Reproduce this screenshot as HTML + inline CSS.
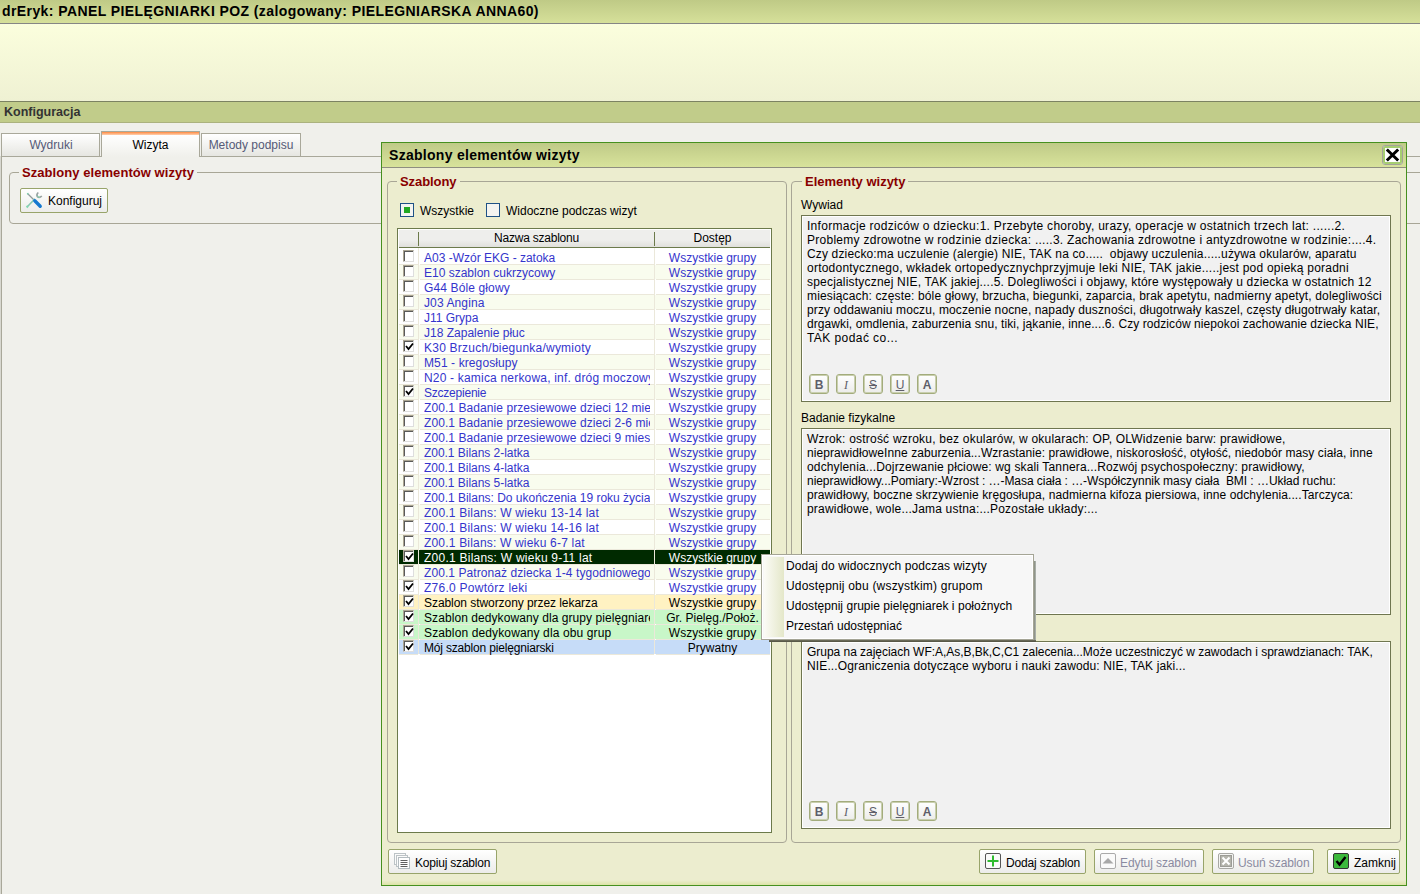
<!DOCTYPE html>
<html><head><meta charset="utf-8">
<style>
*{box-sizing:border-box}
html,body{margin:0;padding:0}
body{width:1420px;height:894px;position:relative;overflow:hidden;background:#f0f0eb;font-family:"Liberation Sans",sans-serif;font-size:12px;color:#000}
.a{position:absolute}
.t{position:absolute;white-space:nowrap;line-height:14px;font-size:12px}
#hdr{left:0;top:0;width:1420px;height:24px;background:linear-gradient(#bfca86,#d6e09a);border-bottom:1px solid #858585}
#hdr .t{left:2px;top:4px;font-weight:bold;font-size:14px;letter-spacing:0.41px;line-height:14px}
#ybar{left:0;top:24px;width:1420px;height:77px;background:linear-gradient(#fbfedd,#eff1d3)}
#kbar{left:0;top:101px;width:1420px;height:22px;background:#c1cc8a;border-top:1px solid #7c8262;border-bottom:1px solid #abb27e}
.tab{position:absolute;border:1px solid #a9a89a;border-bottom:none;background:linear-gradient(#ffffff,#e6e6e1);text-align:center;color:#555a78}
.fs{position:absolute;border:1px solid #a8a696;border-radius:4px}
.lg{position:absolute;font-weight:bold;font-size:13px;color:#880000;white-space:nowrap;line-height:14px;padding:0 3px}
.cb{position:absolute;width:11px;height:12px;background:#fff;border-top:1px solid #aba592;border-left:1px solid #aba592;border-right:1px solid #dedede;border-bottom:1px solid #dedede;box-shadow:inset 1px 1px 0 #5a5a5a}

.ta{position:absolute;left:801px;width:590px;border:1px solid #6f7650;background:#f1f1f1;box-shadow:inset 1px 1px 0 #fff, inset -1px -1px 0 #fff}
.fb{position:absolute;width:20px;height:20px;border:1px solid #a3ac7c;border-radius:3px;background:linear-gradient(#ffffff,#ececea);box-shadow:inset 0 0 0 1px #c9cfae;text-align:center;font-size:12px;line-height:20px;color:#5e5e6a}
.mi{position:absolute;left:786px;white-space:nowrap;font-size:12px;line-height:14px;letter-spacing:0.1px}
.btn{position:absolute;border:1px solid #98a46a;border-radius:2px;background:linear-gradient(#ffffff,#ececea)}
</style></head><body>

<div id="hdr" class="a"><div class="t">drEryk: PANEL PIELĘGNIARKI POZ (zalogowany: PIELEGNIARSKA ANNA60)</div></div>
<div id="ybar" class="a"></div>
<div id="kbar" class="a"><div class="t" style="left:4px;top:3px;font-weight:bold;font-size:12.5px;color:#333">Konfiguracja</div></div>

<!-- tab strip line -->
<div class="a" style="left:1px;top:156px;width:1419px;height:1px;background:#a9a89a"></div>
<!-- panel left border -->
<div class="a" style="left:0;top:156px;width:1px;height:738px;background:#d8d8d0"></div>
<div class="a" style="left:1px;top:156px;width:1px;height:738px;background:#a9a89a"></div>

<div class="tab" style="left:1px;top:133px;width:99px;height:23px"><div class="t" style="left:0;width:98px;top:4px">Wydruki</div></div>
<div class="tab" style="left:101px;top:131px;width:99px;height:26px;background:linear-gradient(#fff 10%,#f0f0eb);border-bottom:none;color:#000"><div class="a" style="left:0;top:0;width:97px;height:3px;background:linear-gradient(#ff8a40,#ffd0b0)"></div><div class="t" style="left:0;width:97px;top:6px">Wizyta</div></div>
<div class="tab" style="left:201px;top:133px;width:100px;height:23px"><div class="t" style="left:0;width:98px;top:4px">Metody podpisu</div></div>

<div class="fs" style="left:9px;top:172px;width:1420px;height:52px"></div>
<div class="lg" style="left:19px;top:166px;background:#f0f0eb;letter-spacing:0.06px">Szablony elementów wizyty</div>
<div class="btn" style="left:20px;top:188px;width:88px;height:25px">
  <svg class="a" style="left:1px;top:-1px" width="24" height="24" viewBox="0 0 24 24">
<path d="M5.5 5.5 L11.5 11.5" stroke="#8f9a9a" stroke-width="1.3"/>
<path d="M4.8 5.2 L6.2 4.8 L6.6 6.4 L5.2 6.6 Z" fill="#7fd0b0"/>
<path d="M5.5 18.5 L13 10.8" stroke="#86c8b0" stroke-width="1.6"/>
<path d="M4.5 18 L6 19.5" stroke="#7fd6b0" stroke-width="1.8"/>
<path d="M16.3 4.5 Q14 6.5 15.5 8.8 Q17.5 10.2 19.8 8" stroke="#96a0a0" stroke-width="1.6" fill="none"/>
<path d="M15 7.5 Q16 9.5 18 9.5" stroke="#7fd6b0" stroke-width="1" fill="none"/>
<path d="M12.8 12.8 L18.2 18.2" stroke="#1578d0" stroke-width="3.4" stroke-linecap="round"/>
</svg>
  <div class="t" style="left:27px;top:5px">Konfiguruj</div>
</div>

<!-- DIALOG -->
<div id="dlg" class="a" style="left:381px;top:142px;width:1026px;height:744px;border:1px solid #46901f;background:#ecedcf"></div>
<div class="a" style="left:382px;top:143px;width:1024px;height:25px;background:linear-gradient(#bfca87,#d8e39b);border-bottom:1px solid #8e8e80"></div>
<div class="t" style="left:389px;top:148px;font-weight:bold;font-size:14px;letter-spacing:0.29px">Szablony elementów wizyty</div>
<div class="a" style="left:1382px;top:145px;width:21px;height:20px;border:1px solid #a4a29a;border-radius:3px;background:#fff;box-shadow:inset 0 0 0 2px #a6ce72"></div>
<svg class="a" style="left:1385px;top:148px" width="15" height="14" viewBox="0 0 15 14"><path d="M1.8 1.5 L13.2 12.5 M13.2 1.5 L1.8 12.5" stroke="#000" stroke-width="3"/></svg>

<div class="a" style="left:382px;top:880px;width:1024px;height:5px;background:linear-gradient(#ecedcf,#dce3a6)"></div>
<!-- left fieldset -->
<div class="fs" style="left:387px;top:181px;width:400px;height:662px"></div>
<div class="lg" style="left:397px;top:175px;background:#ecedcf;letter-spacing:-0.07px">Szablony</div>

<!-- radio-ish checkboxes -->
<div class="a" style="left:400px;top:203px;width:14px;height:14px;border:1px solid #1e5185;background:#f4f4f0"></div>
<div class="a" style="left:404px;top:207px;width:6px;height:6px;background:#22a822"></div>
<div class="t" style="left:420px;top:204px">Wszystkie</div>
<div class="a" style="left:486px;top:203px;width:14px;height:14px;border:1px solid #1e5185;background:#f4f4f0"></div>
<div class="t" style="left:506px;top:204px">Widoczne podczas wizyt</div>

<!-- table -->
<div class="a" style="left:397px;top:228px;width:375px;height:605px;border:1px solid #6c7a4b;background:#fff"></div>
<div class="a" style="left:399px;top:230px;width:371px;height:17px;background:linear-gradient(#eeeeec 60%,#e0e0dc)"></div>
<div class="a" style="left:399px;top:247px;width:371px;height:1px;background:#6c7a4b"></div>
<div class="a" style="left:418px;top:232px;width:1px;height:14px;background:#6c7a4b"></div>
<div class="a" style="left:654px;top:232px;width:1px;height:14px;background:#6c7a4b"></div>
<div class="t" style="left:419px;width:235px;top:231px;text-align:center;letter-spacing:-0.22px">Nazwa szablonu</div>
<div class="t" style="left:655px;width:115px;top:231px;text-align:center">Dostęp</div>
<div class="a" style="left:399px;top:250px;width:19px;height:14px;background:#ffffff"></div>
<div class="a" style="left:419px;top:250px;width:235px;height:14px;background:#ffffff"></div>
<div class="a" style="left:655px;top:250px;width:115px;height:14px;background:#ffffff"></div>
<div class="a" style="left:399px;top:265px;width:19px;height:14px;background:#f9fcee"></div>
<div class="a" style="left:419px;top:265px;width:235px;height:14px;background:#f9fcee"></div>
<div class="a" style="left:655px;top:265px;width:115px;height:14px;background:#f9fcee"></div>
<div class="a" style="left:399px;top:280px;width:19px;height:14px;background:#ffffff"></div>
<div class="a" style="left:419px;top:280px;width:235px;height:14px;background:#ffffff"></div>
<div class="a" style="left:655px;top:280px;width:115px;height:14px;background:#ffffff"></div>
<div class="a" style="left:399px;top:295px;width:19px;height:14px;background:#f9fcee"></div>
<div class="a" style="left:419px;top:295px;width:235px;height:14px;background:#f9fcee"></div>
<div class="a" style="left:655px;top:295px;width:115px;height:14px;background:#f9fcee"></div>
<div class="a" style="left:399px;top:310px;width:19px;height:14px;background:#ffffff"></div>
<div class="a" style="left:419px;top:310px;width:235px;height:14px;background:#ffffff"></div>
<div class="a" style="left:655px;top:310px;width:115px;height:14px;background:#ffffff"></div>
<div class="a" style="left:399px;top:325px;width:19px;height:14px;background:#f9fcee"></div>
<div class="a" style="left:419px;top:325px;width:235px;height:14px;background:#f9fcee"></div>
<div class="a" style="left:655px;top:325px;width:115px;height:14px;background:#f9fcee"></div>
<div class="a" style="left:399px;top:340px;width:19px;height:14px;background:#ffffff"></div>
<div class="a" style="left:419px;top:340px;width:235px;height:14px;background:#ffffff"></div>
<div class="a" style="left:655px;top:340px;width:115px;height:14px;background:#ffffff"></div>
<div class="a" style="left:399px;top:355px;width:19px;height:14px;background:#f9fcee"></div>
<div class="a" style="left:419px;top:355px;width:235px;height:14px;background:#f9fcee"></div>
<div class="a" style="left:655px;top:355px;width:115px;height:14px;background:#f9fcee"></div>
<div class="a" style="left:399px;top:370px;width:19px;height:14px;background:#ffffff"></div>
<div class="a" style="left:419px;top:370px;width:235px;height:14px;background:#ffffff"></div>
<div class="a" style="left:655px;top:370px;width:115px;height:14px;background:#ffffff"></div>
<div class="a" style="left:399px;top:385px;width:19px;height:14px;background:#f9fcee"></div>
<div class="a" style="left:419px;top:385px;width:235px;height:14px;background:#f9fcee"></div>
<div class="a" style="left:655px;top:385px;width:115px;height:14px;background:#f9fcee"></div>
<div class="a" style="left:399px;top:400px;width:19px;height:14px;background:#ffffff"></div>
<div class="a" style="left:419px;top:400px;width:235px;height:14px;background:#ffffff"></div>
<div class="a" style="left:655px;top:400px;width:115px;height:14px;background:#ffffff"></div>
<div class="a" style="left:399px;top:415px;width:19px;height:14px;background:#f9fcee"></div>
<div class="a" style="left:419px;top:415px;width:235px;height:14px;background:#f9fcee"></div>
<div class="a" style="left:655px;top:415px;width:115px;height:14px;background:#f9fcee"></div>
<div class="a" style="left:399px;top:430px;width:19px;height:14px;background:#ffffff"></div>
<div class="a" style="left:419px;top:430px;width:235px;height:14px;background:#ffffff"></div>
<div class="a" style="left:655px;top:430px;width:115px;height:14px;background:#ffffff"></div>
<div class="a" style="left:399px;top:445px;width:19px;height:14px;background:#f9fcee"></div>
<div class="a" style="left:419px;top:445px;width:235px;height:14px;background:#f9fcee"></div>
<div class="a" style="left:655px;top:445px;width:115px;height:14px;background:#f9fcee"></div>
<div class="a" style="left:399px;top:460px;width:19px;height:14px;background:#ffffff"></div>
<div class="a" style="left:419px;top:460px;width:235px;height:14px;background:#ffffff"></div>
<div class="a" style="left:655px;top:460px;width:115px;height:14px;background:#ffffff"></div>
<div class="a" style="left:399px;top:475px;width:19px;height:14px;background:#f9fcee"></div>
<div class="a" style="left:419px;top:475px;width:235px;height:14px;background:#f9fcee"></div>
<div class="a" style="left:655px;top:475px;width:115px;height:14px;background:#f9fcee"></div>
<div class="a" style="left:399px;top:490px;width:19px;height:14px;background:#ffffff"></div>
<div class="a" style="left:419px;top:490px;width:235px;height:14px;background:#ffffff"></div>
<div class="a" style="left:655px;top:490px;width:115px;height:14px;background:#ffffff"></div>
<div class="a" style="left:399px;top:505px;width:19px;height:14px;background:#f9fcee"></div>
<div class="a" style="left:419px;top:505px;width:235px;height:14px;background:#f9fcee"></div>
<div class="a" style="left:655px;top:505px;width:115px;height:14px;background:#f9fcee"></div>
<div class="a" style="left:399px;top:520px;width:19px;height:14px;background:#ffffff"></div>
<div class="a" style="left:419px;top:520px;width:235px;height:14px;background:#ffffff"></div>
<div class="a" style="left:655px;top:520px;width:115px;height:14px;background:#ffffff"></div>
<div class="a" style="left:399px;top:535px;width:19px;height:14px;background:#f9fcee"></div>
<div class="a" style="left:419px;top:535px;width:235px;height:14px;background:#f9fcee"></div>
<div class="a" style="left:655px;top:535px;width:115px;height:14px;background:#f9fcee"></div>
<div class="a" style="left:399px;top:550px;width:19px;height:14px;background:#002a00"></div>
<div class="a" style="left:419px;top:550px;width:235px;height:14px;background:#002a00"></div>
<div class="a" style="left:655px;top:550px;width:115px;height:14px;background:#002a00"></div>
<div class="a" style="left:399px;top:565px;width:19px;height:14px;background:#f9fcee"></div>
<div class="a" style="left:419px;top:565px;width:235px;height:14px;background:#f9fcee"></div>
<div class="a" style="left:655px;top:565px;width:115px;height:14px;background:#f9fcee"></div>
<div class="a" style="left:399px;top:580px;width:19px;height:14px;background:#ffffff"></div>
<div class="a" style="left:419px;top:580px;width:235px;height:14px;background:#ffffff"></div>
<div class="a" style="left:655px;top:580px;width:115px;height:14px;background:#ffffff"></div>
<div class="a" style="left:399px;top:595px;width:19px;height:14px;background:#fff2c2"></div>
<div class="a" style="left:419px;top:595px;width:235px;height:14px;background:#fff2c2"></div>
<div class="a" style="left:655px;top:595px;width:115px;height:14px;background:#fff2c2"></div>
<div class="a" style="left:399px;top:610px;width:19px;height:14px;background:#c8f7c8"></div>
<div class="a" style="left:419px;top:610px;width:235px;height:14px;background:#c8f7c8"></div>
<div class="a" style="left:655px;top:610px;width:115px;height:14px;background:#c8f7c8"></div>
<div class="a" style="left:399px;top:625px;width:19px;height:14px;background:#c8f7c8"></div>
<div class="a" style="left:419px;top:625px;width:235px;height:14px;background:#c8f7c8"></div>
<div class="a" style="left:655px;top:625px;width:115px;height:14px;background:#c8f7c8"></div>
<div class="a" style="left:399px;top:640px;width:19px;height:14px;background:#c6dcf8"></div>
<div class="a" style="left:419px;top:640px;width:235px;height:14px;background:#c6dcf8"></div>
<div class="a" style="left:655px;top:640px;width:115px;height:14px;background:#c6dcf8"></div>
<div class="a" style="left:399px;top:264px;width:19px;height:1px;background:#ebe8da"></div>
<div class="a" style="left:420px;top:264px;width:234px;height:1px;background:#ebe8da"></div>
<div class="a" style="left:656px;top:264px;width:114px;height:1px;background:#ebe8da"></div>
<div class="a" style="left:399px;top:279px;width:19px;height:1px;background:#ebe8da"></div>
<div class="a" style="left:420px;top:279px;width:234px;height:1px;background:#ebe8da"></div>
<div class="a" style="left:656px;top:279px;width:114px;height:1px;background:#ebe8da"></div>
<div class="a" style="left:399px;top:294px;width:19px;height:1px;background:#ebe8da"></div>
<div class="a" style="left:420px;top:294px;width:234px;height:1px;background:#ebe8da"></div>
<div class="a" style="left:656px;top:294px;width:114px;height:1px;background:#ebe8da"></div>
<div class="a" style="left:399px;top:309px;width:19px;height:1px;background:#ebe8da"></div>
<div class="a" style="left:420px;top:309px;width:234px;height:1px;background:#ebe8da"></div>
<div class="a" style="left:656px;top:309px;width:114px;height:1px;background:#ebe8da"></div>
<div class="a" style="left:399px;top:324px;width:19px;height:1px;background:#ebe8da"></div>
<div class="a" style="left:420px;top:324px;width:234px;height:1px;background:#ebe8da"></div>
<div class="a" style="left:656px;top:324px;width:114px;height:1px;background:#ebe8da"></div>
<div class="a" style="left:399px;top:339px;width:19px;height:1px;background:#ebe8da"></div>
<div class="a" style="left:420px;top:339px;width:234px;height:1px;background:#ebe8da"></div>
<div class="a" style="left:656px;top:339px;width:114px;height:1px;background:#ebe8da"></div>
<div class="a" style="left:399px;top:354px;width:19px;height:1px;background:#ebe8da"></div>
<div class="a" style="left:420px;top:354px;width:234px;height:1px;background:#ebe8da"></div>
<div class="a" style="left:656px;top:354px;width:114px;height:1px;background:#ebe8da"></div>
<div class="a" style="left:399px;top:369px;width:19px;height:1px;background:#ebe8da"></div>
<div class="a" style="left:420px;top:369px;width:234px;height:1px;background:#ebe8da"></div>
<div class="a" style="left:656px;top:369px;width:114px;height:1px;background:#ebe8da"></div>
<div class="a" style="left:399px;top:384px;width:19px;height:1px;background:#ebe8da"></div>
<div class="a" style="left:420px;top:384px;width:234px;height:1px;background:#ebe8da"></div>
<div class="a" style="left:656px;top:384px;width:114px;height:1px;background:#ebe8da"></div>
<div class="a" style="left:399px;top:399px;width:19px;height:1px;background:#ebe8da"></div>
<div class="a" style="left:420px;top:399px;width:234px;height:1px;background:#ebe8da"></div>
<div class="a" style="left:656px;top:399px;width:114px;height:1px;background:#ebe8da"></div>
<div class="a" style="left:399px;top:414px;width:19px;height:1px;background:#ebe8da"></div>
<div class="a" style="left:420px;top:414px;width:234px;height:1px;background:#ebe8da"></div>
<div class="a" style="left:656px;top:414px;width:114px;height:1px;background:#ebe8da"></div>
<div class="a" style="left:399px;top:429px;width:19px;height:1px;background:#ebe8da"></div>
<div class="a" style="left:420px;top:429px;width:234px;height:1px;background:#ebe8da"></div>
<div class="a" style="left:656px;top:429px;width:114px;height:1px;background:#ebe8da"></div>
<div class="a" style="left:399px;top:444px;width:19px;height:1px;background:#ebe8da"></div>
<div class="a" style="left:420px;top:444px;width:234px;height:1px;background:#ebe8da"></div>
<div class="a" style="left:656px;top:444px;width:114px;height:1px;background:#ebe8da"></div>
<div class="a" style="left:399px;top:459px;width:19px;height:1px;background:#ebe8da"></div>
<div class="a" style="left:420px;top:459px;width:234px;height:1px;background:#ebe8da"></div>
<div class="a" style="left:656px;top:459px;width:114px;height:1px;background:#ebe8da"></div>
<div class="a" style="left:399px;top:474px;width:19px;height:1px;background:#ebe8da"></div>
<div class="a" style="left:420px;top:474px;width:234px;height:1px;background:#ebe8da"></div>
<div class="a" style="left:656px;top:474px;width:114px;height:1px;background:#ebe8da"></div>
<div class="a" style="left:399px;top:489px;width:19px;height:1px;background:#ebe8da"></div>
<div class="a" style="left:420px;top:489px;width:234px;height:1px;background:#ebe8da"></div>
<div class="a" style="left:656px;top:489px;width:114px;height:1px;background:#ebe8da"></div>
<div class="a" style="left:399px;top:504px;width:19px;height:1px;background:#ebe8da"></div>
<div class="a" style="left:420px;top:504px;width:234px;height:1px;background:#ebe8da"></div>
<div class="a" style="left:656px;top:504px;width:114px;height:1px;background:#ebe8da"></div>
<div class="a" style="left:399px;top:519px;width:19px;height:1px;background:#ebe8da"></div>
<div class="a" style="left:420px;top:519px;width:234px;height:1px;background:#ebe8da"></div>
<div class="a" style="left:656px;top:519px;width:114px;height:1px;background:#ebe8da"></div>
<div class="a" style="left:399px;top:534px;width:19px;height:1px;background:#ebe8da"></div>
<div class="a" style="left:420px;top:534px;width:234px;height:1px;background:#ebe8da"></div>
<div class="a" style="left:656px;top:534px;width:114px;height:1px;background:#ebe8da"></div>
<div class="a" style="left:399px;top:549px;width:19px;height:1px;background:#ebe8da"></div>
<div class="a" style="left:420px;top:549px;width:234px;height:1px;background:#ebe8da"></div>
<div class="a" style="left:656px;top:549px;width:114px;height:1px;background:#ebe8da"></div>
<div class="a" style="left:399px;top:564px;width:19px;height:1px;background:#ebe8da"></div>
<div class="a" style="left:420px;top:564px;width:234px;height:1px;background:#ebe8da"></div>
<div class="a" style="left:656px;top:564px;width:114px;height:1px;background:#ebe8da"></div>
<div class="a" style="left:399px;top:579px;width:19px;height:1px;background:#ebe8da"></div>
<div class="a" style="left:420px;top:579px;width:234px;height:1px;background:#ebe8da"></div>
<div class="a" style="left:656px;top:579px;width:114px;height:1px;background:#ebe8da"></div>
<div class="a" style="left:399px;top:594px;width:19px;height:1px;background:#ebe8da"></div>
<div class="a" style="left:420px;top:594px;width:234px;height:1px;background:#ebe8da"></div>
<div class="a" style="left:656px;top:594px;width:114px;height:1px;background:#ebe8da"></div>
<div class="a" style="left:399px;top:609px;width:19px;height:1px;background:#ebe8da"></div>
<div class="a" style="left:420px;top:609px;width:234px;height:1px;background:#ebe8da"></div>
<div class="a" style="left:656px;top:609px;width:114px;height:1px;background:#ebe8da"></div>
<div class="a" style="left:399px;top:624px;width:19px;height:1px;background:#ebe8da"></div>
<div class="a" style="left:420px;top:624px;width:234px;height:1px;background:#ebe8da"></div>
<div class="a" style="left:656px;top:624px;width:114px;height:1px;background:#ebe8da"></div>
<div class="a" style="left:399px;top:639px;width:19px;height:1px;background:#ebe8da"></div>
<div class="a" style="left:420px;top:639px;width:234px;height:1px;background:#ebe8da"></div>
<div class="a" style="left:656px;top:639px;width:114px;height:1px;background:#ebe8da"></div>
<div class="a" style="left:399px;top:654px;width:19px;height:1px;background:#ebe8da"></div>
<div class="a" style="left:420px;top:654px;width:234px;height:1px;background:#ebe8da"></div>
<div class="a" style="left:656px;top:654px;width:114px;height:1px;background:#ebe8da"></div>
<div class="a" style="left:418px;top:248px;width:1px;height:406px;background:#ebe8da"></div>
<div class="a" style="left:654px;top:248px;width:1px;height:406px;background:#ebe8da"></div>
<div class="cb" style="left:403px;top:250px"></div>
<div class="t" style="left:424px;top:251px;width:226px;overflow:hidden;color:#3434cc;letter-spacing:-0.004px">A03 -Wzór EKG - zatoka</div>
<div class="t" style="left:655px;top:251px;width:115px;text-align:center;color:#3434cc">Wszystkie grupy</div>
<div class="cb" style="left:403px;top:265px"></div>
<div class="t" style="left:424px;top:266px;width:226px;overflow:hidden;color:#3434cc;letter-spacing:-0.004px">E10 szablon cukrzycowy</div>
<div class="t" style="left:655px;top:266px;width:115px;text-align:center;color:#3434cc">Wszystkie grupy</div>
<div class="cb" style="left:403px;top:280px"></div>
<div class="t" style="left:424px;top:281px;width:226px;overflow:hidden;color:#3434cc;letter-spacing:0.127px">G44 Bóle głowy</div>
<div class="t" style="left:655px;top:281px;width:115px;text-align:center;color:#3434cc">Wszystkie grupy</div>
<div class="cb" style="left:403px;top:295px"></div>
<div class="t" style="left:424px;top:296px;width:226px;overflow:hidden;color:#3434cc;letter-spacing:0.112px">J03 Angina</div>
<div class="t" style="left:655px;top:296px;width:115px;text-align:center;color:#3434cc">Wszystkie grupy</div>
<div class="cb" style="left:403px;top:310px"></div>
<div class="t" style="left:424px;top:311px;width:226px;overflow:hidden;color:#3434cc;letter-spacing:-0.021px">J11 Grypa</div>
<div class="t" style="left:655px;top:311px;width:115px;text-align:center;color:#3434cc">Wszystkie grupy</div>
<div class="cb" style="left:403px;top:325px"></div>
<div class="t" style="left:424px;top:326px;width:226px;overflow:hidden;color:#3434cc;letter-spacing:0.004px">J18 Zapalenie płuc</div>
<div class="t" style="left:655px;top:326px;width:115px;text-align:center;color:#3434cc">Wszystkie grupy</div>
<div class="cb" style="left:403px;top:340px"><svg width="9" height="9" viewBox="0 0 9 9" style="position:absolute;left:1px;top:1px"><path d="M1 4 L3.5 7 L8 1.5" stroke="#000" stroke-width="1.8" fill="none"/></svg></div>
<div class="t" style="left:424px;top:341px;width:226px;overflow:hidden;color:#3434cc;letter-spacing:0.229px">K30 Brzuch/biegunka/wymioty</div>
<div class="t" style="left:655px;top:341px;width:115px;text-align:center;color:#3434cc">Wszystkie grupy</div>
<div class="cb" style="left:403px;top:355px"></div>
<div class="t" style="left:424px;top:356px;width:226px;overflow:hidden;color:#3434cc;letter-spacing:0.104px">M51 - kregosłupy</div>
<div class="t" style="left:655px;top:356px;width:115px;text-align:center;color:#3434cc">Wszystkie grupy</div>
<div class="cb" style="left:403px;top:370px"></div>
<div class="t" style="left:424px;top:371px;width:226px;overflow:hidden;color:#3434cc;letter-spacing:0.190px">N20 - kamica nerkowa, inf. dróg moczowych</div>
<div class="t" style="left:655px;top:371px;width:115px;text-align:center;color:#3434cc">Wszystkie grupy</div>
<div class="cb" style="left:403px;top:385px"><svg width="9" height="9" viewBox="0 0 9 9" style="position:absolute;left:1px;top:1px"><path d="M1 4 L3.5 7 L8 1.5" stroke="#000" stroke-width="1.8" fill="none"/></svg></div>
<div class="t" style="left:424px;top:386px;width:226px;overflow:hidden;color:#3434cc;letter-spacing:-0.222px">Szczepienie</div>
<div class="t" style="left:655px;top:386px;width:115px;text-align:center;color:#3434cc">Wszystkie grupy</div>
<div class="cb" style="left:403px;top:400px"></div>
<div class="t" style="left:424px;top:401px;width:226px;overflow:hidden;color:#3434cc;letter-spacing:0.072px">Z00.1 Badanie przesiewowe dzieci 12 miesięcy</div>
<div class="t" style="left:655px;top:401px;width:115px;text-align:center;color:#3434cc">Wszystkie grupy</div>
<div class="cb" style="left:403px;top:415px"></div>
<div class="t" style="left:424px;top:416px;width:226px;overflow:hidden;color:#3434cc;letter-spacing:0.072px">Z00.1 Badanie przesiewowe dzieci 2-6 miesięcy</div>
<div class="t" style="left:655px;top:416px;width:115px;text-align:center;color:#3434cc">Wszystkie grupy</div>
<div class="cb" style="left:403px;top:430px"></div>
<div class="t" style="left:424px;top:431px;width:226px;overflow:hidden;color:#3434cc;letter-spacing:0.072px">Z00.1 Badanie przesiewowe dzieci 9 miesięcy</div>
<div class="t" style="left:655px;top:431px;width:115px;text-align:center;color:#3434cc">Wszystkie grupy</div>
<div class="cb" style="left:403px;top:445px"></div>
<div class="t" style="left:424px;top:446px;width:226px;overflow:hidden;color:#3434cc;letter-spacing:-0.035px">Z00.1 Bilans 2-latka</div>
<div class="t" style="left:655px;top:446px;width:115px;text-align:center;color:#3434cc">Wszystkie grupy</div>
<div class="cb" style="left:403px;top:460px"></div>
<div class="t" style="left:424px;top:461px;width:226px;overflow:hidden;color:#3434cc;letter-spacing:-0.035px">Z00.1 Bilans 4-latka</div>
<div class="t" style="left:655px;top:461px;width:115px;text-align:center;color:#3434cc">Wszystkie grupy</div>
<div class="cb" style="left:403px;top:475px"></div>
<div class="t" style="left:424px;top:476px;width:226px;overflow:hidden;color:#3434cc;letter-spacing:-0.035px">Z00.1 Bilans 5-latka</div>
<div class="t" style="left:655px;top:476px;width:115px;text-align:center;color:#3434cc">Wszystkie grupy</div>
<div class="cb" style="left:403px;top:490px"></div>
<div class="t" style="left:424px;top:491px;width:226px;overflow:hidden;color:#3434cc;letter-spacing:-0.012px">Z00.1 Bilans: Do ukończenia 19 roku życia</div>
<div class="t" style="left:655px;top:491px;width:115px;text-align:center;color:#3434cc">Wszystkie grupy</div>
<div class="cb" style="left:403px;top:505px"></div>
<div class="t" style="left:424px;top:506px;width:226px;overflow:hidden;color:#3434cc;letter-spacing:0.202px">Z00.1 Bilans: W wieku 13-14 lat</div>
<div class="t" style="left:655px;top:506px;width:115px;text-align:center;color:#3434cc">Wszystkie grupy</div>
<div class="cb" style="left:403px;top:520px"></div>
<div class="t" style="left:424px;top:521px;width:226px;overflow:hidden;color:#3434cc;letter-spacing:0.202px">Z00.1 Bilans: W wieku 14-16 lat</div>
<div class="t" style="left:655px;top:521px;width:115px;text-align:center;color:#3434cc">Wszystkie grupy</div>
<div class="cb" style="left:403px;top:535px"></div>
<div class="t" style="left:424px;top:536px;width:226px;overflow:hidden;color:#3434cc;letter-spacing:0.185px">Z00.1 Bilans: W wieku 6-7 lat</div>
<div class="t" style="left:655px;top:536px;width:115px;text-align:center;color:#3434cc">Wszystkie grupy</div>
<div class="cb" style="left:403px;top:550px"><svg width="9" height="9" viewBox="0 0 9 9" style="position:absolute;left:1px;top:1px"><path d="M1 4 L3.5 7 L8 1.5" stroke="#000" stroke-width="1.8" fill="none"/></svg></div>
<div class="t" style="left:424px;top:551px;width:226px;overflow:hidden;color:#fff;letter-spacing:0.242px">Z00.1 Bilans: W wieku 9-11 lat</div>
<div class="t" style="left:655px;top:551px;width:115px;text-align:center;color:#fff">Wszystkie grupy</div>
<div class="cb" style="left:403px;top:565px"></div>
<div class="t" style="left:424px;top:566px;width:226px;overflow:hidden;color:#3434cc;letter-spacing:0.070px">Z00.1 Patronaż dziecka 1-4 tygodniowego</div>
<div class="t" style="left:655px;top:566px;width:115px;text-align:center;color:#3434cc">Wszystkie grupy</div>
<div class="cb" style="left:403px;top:580px"><svg width="9" height="9" viewBox="0 0 9 9" style="position:absolute;left:1px;top:1px"><path d="M1 4 L3.5 7 L8 1.5" stroke="#000" stroke-width="1.8" fill="none"/></svg></div>
<div class="t" style="left:424px;top:581px;width:226px;overflow:hidden;color:#3434cc;letter-spacing:0.264px">Z76.0 Powtórz leki</div>
<div class="t" style="left:655px;top:581px;width:115px;text-align:center;color:#3434cc">Wszystkie grupy</div>
<div class="cb" style="left:403px;top:595px"><svg width="9" height="9" viewBox="0 0 9 9" style="position:absolute;left:1px;top:1px"><path d="M1 4 L3.5 7 L8 1.5" stroke="#000" stroke-width="1.8" fill="none"/></svg></div>
<div class="t" style="left:424px;top:596px;width:226px;overflow:hidden;color:#000;letter-spacing:-0.061px">Szablon stworzony przez lekarza</div>
<div class="t" style="left:655px;top:596px;width:115px;text-align:center;color:#000">Wszystkie grupy</div>
<div class="cb" style="left:403px;top:610px"><svg width="9" height="9" viewBox="0 0 9 9" style="position:absolute;left:1px;top:1px"><path d="M1 4 L3.5 7 L8 1.5" stroke="#000" stroke-width="1.8" fill="none"/></svg></div>
<div class="t" style="left:424px;top:611px;width:226px;overflow:hidden;color:#000;letter-spacing:0.074px">Szablon dedykowany dla grupy pielęgniarek</div>
<div class="t" style="left:655px;top:611px;width:115px;text-align:center;color:#000">Gr. Pielęg./Położ.</div>
<div class="cb" style="left:403px;top:625px"><svg width="9" height="9" viewBox="0 0 9 9" style="position:absolute;left:1px;top:1px"><path d="M1 4 L3.5 7 L8 1.5" stroke="#000" stroke-width="1.8" fill="none"/></svg></div>
<div class="t" style="left:424px;top:626px;width:226px;overflow:hidden;color:#000;letter-spacing:0.124px">Szablon dedykowany dla obu grup</div>
<div class="t" style="left:655px;top:626px;width:115px;text-align:center;color:#000">Wszystkie grupy</div>
<div class="cb" style="left:403px;top:640px"><svg width="9" height="9" viewBox="0 0 9 9" style="position:absolute;left:1px;top:1px"><path d="M1 4 L3.5 7 L8 1.5" stroke="#000" stroke-width="1.8" fill="none"/></svg></div>
<div class="t" style="left:424px;top:641px;width:226px;overflow:hidden;color:#000;letter-spacing:-0.178px">Mój szablon pielęgniarski</div>
<div class="t" style="left:655px;top:641px;width:115px;text-align:center;color:#000">Prywatny</div>

<!-- right fieldset -->
<div class="fs" style="left:791px;top:181px;width:610px;height:662px"></div>
<div class="lg" style="left:802px;top:175px;background:#ecedcf">Elementy wizyty</div>


<div class="t" style="left:801px;top:198px">Wywiad</div>
<div class="ta" style="top:215px;height:187px"></div>
<div class="t" style="left:807px;top:219px;letter-spacing:0.286px">Informacje rodziców o dziecku:1. Przebyte choroby, urazy, operacje w ostatnich trzech lat: ......2.</div>
<div class="t" style="left:807px;top:233px;letter-spacing:0.268px">Problemy zdrowotne w rodzinie dziecka: .....3. Zachowania zdrowotne i antyzdrowotne w rodzinie:....4.</div>
<div class="t" style="left:807px;top:247px;letter-spacing:0.152px">Czy dziecko:ma uczulenie (alergie) NIE, TAK na co.....&nbsp; objawy uczulenia.....używa okularów, aparatu</div>
<div class="t" style="left:807px;top:261px;letter-spacing:0.230px">ortodontycznego, wkładek ortopedycznychprzyjmuje leki NIE, TAK jakie.....jest pod opieką poradni</div>
<div class="t" style="left:807px;top:275px;letter-spacing:0.196px">specjalistycznej NIE, TAK jakiej....5. Dolegliwości i objawy, które występowały u dziecka w ostatnich 12</div>
<div class="t" style="left:807px;top:289px;letter-spacing:0.146px">miesiącach: częste: bóle głowy, brzucha, biegunki, zaparcia, brak apetytu, nadmierny apetyt, dolegliwości</div>
<div class="t" style="left:807px;top:303px;letter-spacing:0.114px">przy oddawaniu moczu, moczenie nocne, napady duszności, długotrwały kaszel, częsty długotrwały katar,</div>
<div class="t" style="left:807px;top:317px;letter-spacing:0.075px">drgawki, omdlenia, zaburzenia snu, tiki, jąkanie, inne....6. Czy rodziców niepokoi zachowanie dziecka NIE,</div>
<div class="t" style="left:807px;top:331px;letter-spacing:0.429px">TAK podać co...</div>
<div class="fb" style="left:809px;top:374px;font-weight:bold">B</div>
<div class="fb" style="left:836px;top:374px;font-style:italic;font-family:'Liberation Serif'">I</div>
<div class="fb" style="left:863px;top:374px;text-decoration:line-through">S</div>
<div class="fb" style="left:890px;top:374px;text-decoration:underline">U</div>
<div class="fb" style="left:917px;top:374px;font-weight:bold">A</div>

<div class="t" style="left:801px;top:411px">Badanie fizykalne</div>
<div class="ta" style="top:428px;height:187px"></div>
<div class="t" style="left:807px;top:432px;letter-spacing:0.214px">Wzrok: ostrość wzroku, bez okularów, w okularach: OP, OLWidzenie barw: prawidłowe,</div>
<div class="t" style="left:807px;top:446px;letter-spacing:0.079px">nieprawidłoweInne zaburzenia...Wzrastanie: prawidłowe, niskorosłość, otyłość, niedobór masy ciała, inne</div>
<div class="t" style="left:807px;top:460px;letter-spacing:0.143px">odchylenia...Dojrzewanie płciowe: wg skali Tannera...Rozwój psychospołeczny: prawidłowy,</div>
<div class="t" style="left:807px;top:474px;letter-spacing:-0.048px">nieprawidłowy...Pomiary:-Wzrost : …-Masa ciała : …-Współczynnik masy ciała&nbsp; BMI : …Układ ruchu:</div>
<div class="t" style="left:807px;top:488px;letter-spacing:0.089px">prawidłowy, boczne skrzywienie kręgosłupa, nadmierna kifoza piersiowa, inne odchylenia....Tarczyca:</div>
<div class="t" style="left:807px;top:502px;letter-spacing:0.190px">prawidłowe, wole...Jama ustna:...Pozostałe układy:...</div>
<div class="fb" style="left:809px;top:587px;font-weight:bold">B</div>
<div class="fb" style="left:836px;top:587px;font-style:italic;font-family:'Liberation Serif'">I</div>
<div class="fb" style="left:863px;top:587px;text-decoration:line-through">S</div>
<div class="fb" style="left:890px;top:587px;text-decoration:underline">U</div>
<div class="fb" style="left:917px;top:587px;font-weight:bold">A</div>

<div class="t" style="left:801px;top:624px">Zalecenia</div>
<div class="ta" style="top:641px;height:188px"></div>
<div class="t" style="left:807px;top:645px;letter-spacing:-0.033px">Grupa na zajęciach WF:A,As,B,Bk,C,C1 zalecenia...Może uczestniczyć w zawodach i sprawdzianach: TAK,</div>
<div class="t" style="left:807px;top:659px;letter-spacing:0.131px">NIE...Ograniczenia dotyczące wyboru i nauki zawodu: NIE, TAK jaki...</div>
<div class="fb" style="left:809px;top:801px;font-weight:bold">B</div>
<div class="fb" style="left:836px;top:801px;font-style:italic;font-family:'Liberation Serif'">I</div>
<div class="fb" style="left:863px;top:801px;text-decoration:line-through">S</div>
<div class="fb" style="left:890px;top:801px;text-decoration:underline">U</div>
<div class="fb" style="left:917px;top:801px;font-weight:bold">A</div>

<!-- bottom buttons -->
<div class="btn" style="left:388px;top:849px;width:109px;height:25px">
 <svg class="a" style="left:4px;top:2px" width="17" height="17" viewBox="0 0 17 17">
  <rect x="1.5" y="1.5" width="11" height="11" fill="#fbfbfb" stroke="#bcc3c6"/>
  <rect x="3.5" y="3.5" width="11" height="11" fill="#fbfbfb" stroke="#bcc3c6"/>
  <rect x="5.5" y="5.5" width="11" height="11" fill="#fff" stroke="#b4bcc0"/>
  <path d="M7.5 8.5h7M7.5 10.5h7M7.5 12.5h7M7.5 14.5h7" stroke="#606060" stroke-width="1"/>
 </svg>
 <div class="t" style="left:26px;top:6px;letter-spacing:-0.2px">Kopiuj szablon</div>
</div>
<div class="btn" style="left:979px;top:849px;width:107px;height:25px">
 <svg class="a" style="left:5px;top:3px" width="16" height="16" viewBox="0 0 16 16"><rect x="0.5" y="0.5" width="15" height="15" rx="1.5" fill="#fafafa" stroke="#555"/><path d="M8 2.5v11M2.5 8h11" stroke="#2fbb2f" stroke-width="2"/></svg>
 <div class="t" style="left:26px;top:6px;letter-spacing:-0.15px">Dodaj szablon</div>
</div>
<div class="btn" style="left:1094px;top:849px;width:110px;height:25px">
 <svg class="a" style="left:5px;top:3px" width="16" height="16" viewBox="0 0 16 16"><rect x="0.5" y="0.5" width="15" height="15" rx="1.5" fill="#fafafa" stroke="#aaa"/><path d="M2.5 10.5 L8 5 L13.5 10.5 Z" fill="#a8a8a8"/></svg>
 <div class="t" style="left:25px;top:6px;color:#8a8aa0;letter-spacing:-0.1px">Edytuj szablon</div>
</div>
<div class="btn" style="left:1212px;top:849px;width:102px;height:25px">
 <svg class="a" style="left:5px;top:3px" width="16" height="16" viewBox="0 0 16 16"><rect x="0.5" y="0.5" width="15" height="15" rx="1.5" fill="#f4f4f2" stroke="#a8a8a4"/><rect x="2.5" y="2.5" width="11" height="11" fill="#b4b4ac" stroke="#9c9c96"/><path d="M4.5 4.5 L11.5 11.5 M11.5 4.5 L4.5 11.5" stroke="#fff" stroke-width="2"/></svg>
 <div class="t" style="left:25px;top:6px;color:#8a8aa0;letter-spacing:-0.1px">Usuń szablon</div>
</div>
<div class="btn" style="left:1327px;top:849px;width:73px;height:25px">
 <svg class="a" style="left:5px;top:3px" width="16" height="16" viewBox="0 0 16 16"><rect x="0.5" y="0.5" width="15" height="15" rx="1.5" fill="#3cb83c" stroke="#333"/><path d="M3.5 8 L6.5 11.5 L12.5 4" stroke="#000" stroke-width="2.4" fill="none"/></svg>
 <div class="t" style="left:26px;top:6px">Zamknij</div>
</div>

<!-- context menu -->
<div class="a" style="left:1034px;top:561px;width:2px;height:81px;background:linear-gradient(90deg,#84887a,#b4bab6)"></div>
<div class="a" style="left:769px;top:640px;width:267px;height:2px;background:linear-gradient(#70705e,#505040)"></div>
<div class="a" style="left:761px;top:554px;width:273px;height:86px;border:1px solid #a5a596;background:#f7f7f7;box-shadow:inset 1px 1px 0 #fff,inset -1px -1px 0 #fff"></div>
<div class="a" style="left:764px;top:557px;width:20px;height:80px;background:linear-gradient(90deg,#fbfbf6,#e4e7c9)"></div>
<div class="mi" style="top:559px">Dodaj do widocznych podczas wizyty</div>
<div class="mi" style="top:579px;letter-spacing:0.2px">Udostępnij obu (wszystkim) grupom</div>
<div class="mi" style="top:599px;letter-spacing:0.035px">Udostępnij grupie pielęgniarek i położnych</div>
<div class="mi" style="top:619px;letter-spacing:0.03px">Przestań udostępniać</div>

</body></html>
